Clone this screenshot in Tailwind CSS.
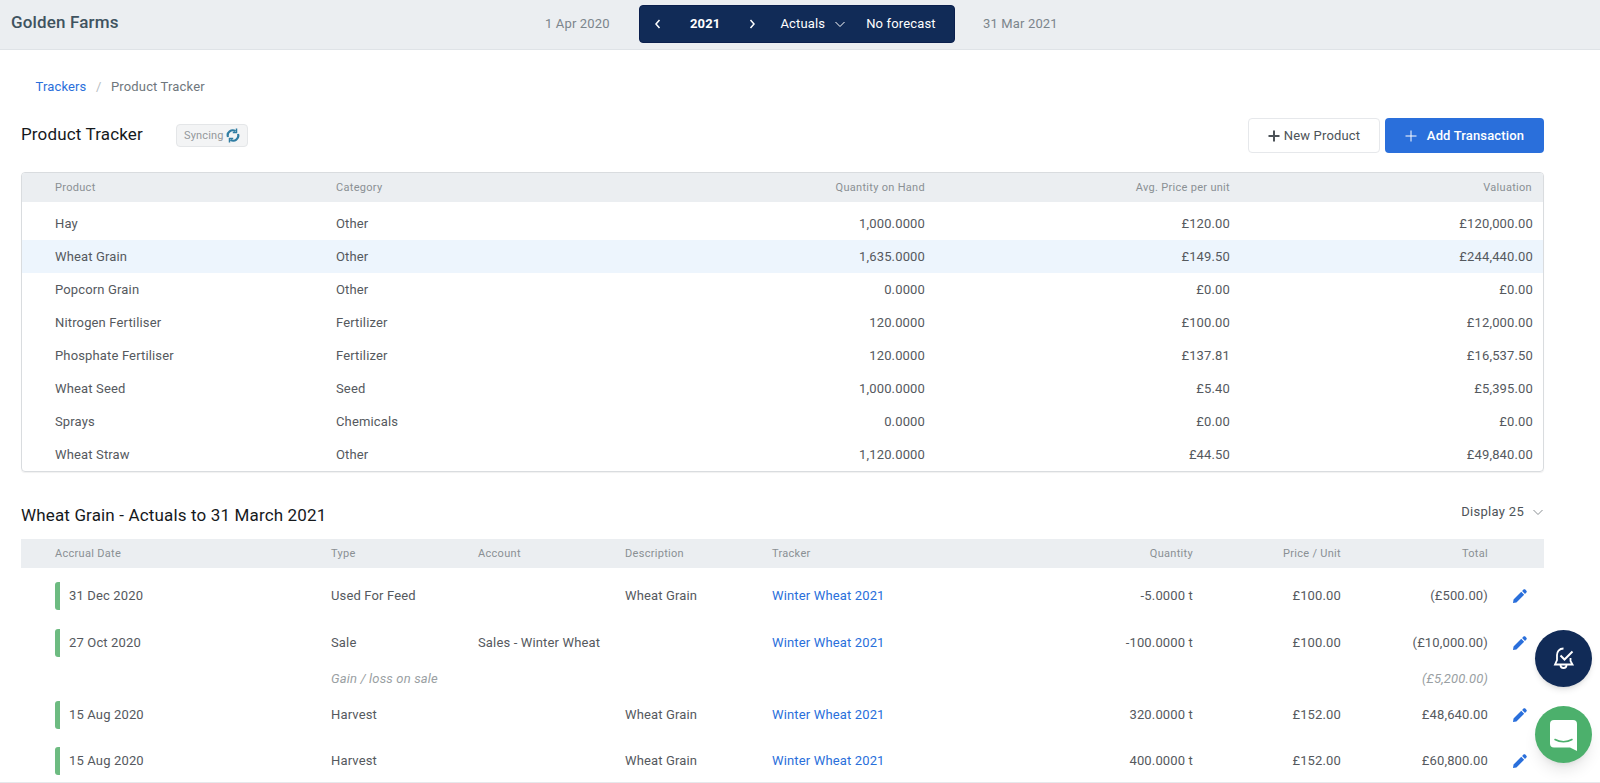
<!DOCTYPE html>
<html lang="en">
<head>
  <meta charset="UTF-8" />
  <meta name="viewport" content="width=device-width, initial-scale=1.0" />
  <title>Product Tracker</title>
  <script src="https://cdn.jsdelivr.net/npm/@tailwindcss/browser@4"></script>
</head>
<body class="h-[783px] overflow-hidden bg-white font-['Roboto',sans-serif] text-[13px] tracking-[0.15px] text-[#55595e]">
  <!-- Top bar -->
  <header class="relative flex h-[50px] items-center border-b border-[#dfe3e7] bg-[#ebeef1] pb-[2px]">
    <span class="mb-[2px] ml-[11px] w-[534px] text-[17px] font-medium text-[#3f5360]">Golden Farms</span>
    <span class="w-[94px] text-[#7c858c]">1 Apr 2020</span>
    <div class="flex h-[38px] w-[316px] items-center rounded border border-[#0a1f4d] bg-[#112b57] text-white">
      <svg class="ml-[12px] h-3 w-3" viewBox="0 0 12 12" fill="none" stroke="white" stroke-width="1.5"><path d="M7.500 2 4 6l3.500 4" /></svg>
      <span class="ml-[26px] text-[13px] font-bold">2021</span>
      <svg class="ml-[26px] h-3 w-3" viewBox="0 0 12 12" fill="none" stroke="white" stroke-width="1.5"><path d="M4.500 2 8 6l-3.500 4" /></svg>
      <span class="ml-[22px]">Actuals</span>
      <svg class="ml-[9px] h-3 w-3" viewBox="0 0 12 12" fill="none" stroke="white" stroke-width="1"><path d="M1.500 4 6 8.500 10.500 4" /></svg>
      <span class="ml-[20px]">No forecast</span>
    </div>
    <span class="ml-7 text-[#7c858c]">31 Mar 2021</span>
  </header>

  <main class="pr-[56px] pl-[21px]">
    <!-- Breadcrumb -->
    <nav class="mt-[26px] flex h-[22px] items-center gap-[9.5px] pl-[14.5px] text-[#6f777d]">
      <a class="text-[#2a6fdb]">Trackers</a><span class="text-[#b8bdc2]">/</span><span>Product Tracker</span>
    </nav>

    <!-- Title row -->
    <div class="mt-[20px] flex h-[35px] items-center">
      <h1 class="mb-[2px] w-[155px] text-[17px] font-normal text-[#16191c]">Product Tracker</h1>
      <span class="flex h-[23px] items-center gap-[2px] rounded border border-[#e4e6e8] bg-[#f3f4f5] px-[7px] text-[11px] text-[#93989c]"><span class="mt-[2px]">Syncing</span>
        <svg class="h-[15px] w-[14px]" viewBox="0 0 14 15" fill="none" stroke="#2f7da3" stroke-width="2.200"><path d="M2 9A5 5 0 0 1 9.500 3.200" /><path d="M12 6A5 5 0 0 1 4.500 11.800" /><path d="M10.500 0.500v4H6.800M3.500 14.500v-4h3.700" stroke-width="1.500" /></svg>
      </span>
      <button class="ml-auto flex h-[35px] w-[132px] items-center justify-center gap-1 rounded border border-[#e6e8eb] bg-white text-[#4d5358]">
        <svg class="h-3 w-3" viewBox="0 0 12 12" stroke="#4d5358" stroke-width="2"><path d="M6 0.500v11M0.500 6h11" /></svg>New Product
      </button>
      <button class="ml-[5px] flex h-[35px] w-[159px] items-center justify-center gap-[10px] rounded bg-[#2a6fdb] font-medium text-white">
        <svg class="h-3 w-3" viewBox="0 0 12 12" stroke="white" stroke-width="1"><path d="M6 0.500v11M0.500 6h11" /></svg>Add Transaction
      </button>
    </div>

    <!-- Product table -->
    <section class="mt-[19px] h-[300px] overflow-hidden rounded border border-[#d9dcdf] shadow-[0_1px_1px_rgba(0,0,0,0.06)]">
      <div class="grid h-[29px] grid-cols-[281px_280px_309px_305px_1fr] items-center bg-[#ebeef1] pt-[2px] pr-[11px] pl-[33px] text-[11px] tracking-[0.3px] text-[#8a9094]">
        <span>Product</span><span>Category</span><span class="text-right">Quantity on Hand</span><span class="text-right">Avg. Price per unit</span><span class="text-right">Valuation</span>
      </div>
      <div class="pt-[5px]">
        <div class="grid h-[33px] grid-cols-[281px_280px_309px_305px_1fr] items-center pr-[10px] pl-[33px]"><span>Hay</span><span>Other</span><span class="text-right">1,000.0000</span><span class="text-right">£120.00</span><span class="text-right">£120,000.00</span></div>
        <div class="grid h-[33px] grid-cols-[281px_280px_309px_305px_1fr] items-center bg-[#edf5fd] pr-[10px] pl-[33px]"><span>Wheat Grain</span><span>Other</span><span class="text-right">1,635.0000</span><span class="text-right">£149.50</span><span class="text-right">£244,440.00</span></div>
        <div class="grid h-[33px] grid-cols-[281px_280px_309px_305px_1fr] items-center pr-[10px] pl-[33px]"><span>Popcorn Grain</span><span>Other</span><span class="text-right">0.0000</span><span class="text-right">£0.00</span><span class="text-right">£0.00</span></div>
        <div class="grid h-[33px] grid-cols-[281px_280px_309px_305px_1fr] items-center pr-[10px] pl-[33px]"><span>Nitrogen Fertiliser</span><span>Fertilizer</span><span class="text-right">120.0000</span><span class="text-right">£100.00</span><span class="text-right">£12,000.00</span></div>
        <div class="grid h-[33px] grid-cols-[281px_280px_309px_305px_1fr] items-center pr-[10px] pl-[33px]"><span>Phosphate Fertiliser</span><span>Fertilizer</span><span class="text-right">120.0000</span><span class="text-right">£137.81</span><span class="text-right">£16,537.50</span></div>
        <div class="grid h-[33px] grid-cols-[281px_280px_309px_305px_1fr] items-center pr-[10px] pl-[33px]"><span>Wheat Seed</span><span>Seed</span><span class="text-right">1,000.0000</span><span class="text-right">£5.40</span><span class="text-right">£5,395.00</span></div>
        <div class="grid h-[33px] grid-cols-[281px_280px_309px_305px_1fr] items-center pr-[10px] pl-[33px]"><span>Sprays</span><span>Chemicals</span><span class="text-right">0.0000</span><span class="text-right">£0.00</span><span class="text-right">£0.00</span></div>
        <div class="grid h-[33px] grid-cols-[281px_280px_309px_305px_1fr] items-center pr-[10px] pl-[33px]"><span>Wheat Straw</span><span>Other</span><span class="text-right">1,120.0000</span><span class="text-right">£44.50</span><span class="text-right">£49,840.00</span></div>
      </div>
    </section>

    <!-- Transactions -->
    <div class="mt-[29px] flex h-[30px] items-center">
      <h2 class="text-[17px] font-normal text-[#16191c]">Wheat Grain - Actuals to 31 March 2021</h2>
      <span class="mb-2 ml-auto flex items-center gap-2 tracking-[0.3px] text-[#4d5358]">Display 25
        <svg class="h-3 w-3" viewBox="0 0 12 12" fill="none" stroke="#8a9094" stroke-width="1"><path d="M1.500 4 6 8.500 10.500 4" /></svg>
      </span>
    </div>
    <section class="mt-[8px]">
      <div class="grid h-[29px] grid-cols-[276px_147px_147px_147px_206px_215px_148px_147px_1fr] items-center bg-[#ebeef1] pt-[2px] pl-[34px] text-[11px] tracking-[0.3px] text-[#8a9094]">
        <span>Accrual Date</span><span>Type</span><span>Account</span><span>Description</span><span>Tracker</span><span class="text-right">Quantity</span><span class="text-right">Price / Unit</span><span class="text-right">Total</span><span></span>
      </div>
      <div class="mt-[4px] grid h-[48px] grid-cols-[276px_147px_147px_147px_206px_215px_148px_147px_1fr] items-center pl-[34px]">
        <span class="flex items-center gap-[9px]"><i class="h-[28px] w-[5px] rounded-l-[3px] bg-[#6dbb81]"></i>31 Dec 2020</span><span>Used For Feed</span><span></span><span>Wheat Grain</span><span class="text-[#2a6fdb]">Winter Wheat 2021</span><span class="text-right">-5.0000 t</span><span class="text-right">£100.00</span><span class="text-right">(£500.00)</span>
        <svg class="-mt-[2px] ml-[25px] h-[15px] w-[15px]" viewBox="0 0 14 14" fill="#2a6fdb"><path d="M0.500 10.800 0 14l3.200-.5 7.200-7.200-2.700-2.700zM8.500 2.800l2.700 2.700 1.300-1.300c.5-.5.500-1.200 0-1.700l-1-1c-.5-.5-1.200-.5-1.700 0z" /></svg>
      </div>
      <div class="grid h-[46px] grid-cols-[276px_147px_147px_147px_206px_215px_148px_147px_1fr] items-center pl-[34px]">
        <span class="flex items-center gap-[9px]"><i class="h-[28px] w-[5px] rounded-l-[3px] bg-[#6dbb81]"></i>27 Oct 2020</span><span>Sale</span><span>Sales - Winter Wheat</span><span></span><span class="text-[#2a6fdb]">Winter Wheat 2021</span><span class="text-right">-100.0000 t</span><span class="text-right">£100.00</span><span class="text-right">(£10,000.00)</span>
        <svg class="-mt-[2px] ml-[25px] h-[15px] w-[15px]" viewBox="0 0 14 14" fill="#2a6fdb"><path d="M0.500 10.800 0 14l3.200-.5 7.200-7.200-2.700-2.700zM8.500 2.800l2.700 2.700 1.300-1.300c.5-.5.500-1.200 0-1.700l-1-1c-.5-.5-1.200-.5-1.700 0z" /></svg>
      </div>
      <div class="grid h-[26px] grid-cols-[276px_147px_147px_147px_206px_215px_148px_147px_1fr] items-center pl-[34px] text-[#9a9fa3] italic">
        <span></span><span class="col-span-2">Gain / loss on sale</span><span></span><span></span><span></span><span></span><span class="text-right">(£5,200.00)</span>
      </div>
      <div class="grid h-[46px] grid-cols-[276px_147px_147px_147px_206px_215px_148px_147px_1fr] items-center pl-[34px]">
        <span class="flex items-center gap-[9px]"><i class="h-[28px] w-[5px] rounded-l-[3px] bg-[#6dbb81]"></i>15 Aug 2020</span><span>Harvest</span><span></span><span>Wheat Grain</span><span class="text-[#2a6fdb]">Winter Wheat 2021</span><span class="text-right">320.0000 t</span><span class="text-right">£152.00</span><span class="text-right">£48,640.00</span>
        <svg class="-mt-[2px] ml-[25px] h-[15px] w-[15px]" viewBox="0 0 14 14" fill="#2a6fdb"><path d="M0.500 10.800 0 14l3.200-.5 7.200-7.200-2.700-2.700zM8.500 2.800l2.700 2.700 1.300-1.300c.5-.5.500-1.200 0-1.700l-1-1c-.5-.5-1.200-.5-1.700 0z" /></svg>
      </div>
      <div class="grid h-[46px] grid-cols-[276px_147px_147px_147px_206px_215px_148px_147px_1fr] items-center pl-[34px]">
        <span class="flex items-center gap-[9px]"><i class="h-[28px] w-[5px] rounded-l-[3px] bg-[#6dbb81]"></i>15 Aug 2020</span><span>Harvest</span><span></span><span>Wheat Grain</span><span class="text-[#2a6fdb]">Winter Wheat 2021</span><span class="text-right">400.0000 t</span><span class="text-right">£152.00</span><span class="text-right">£60,800.00</span>
        <svg class="-mt-[2px] ml-[25px] h-[15px] w-[15px]" viewBox="0 0 14 14" fill="#2a6fdb"><path d="M0.500 10.800 0 14l3.200-.5 7.200-7.200-2.700-2.700zM8.500 2.800l2.700 2.700 1.300-1.300c.5-.5.500-1.200 0-1.700l-1-1c-.5-.5-1.200-.5-1.700 0z" /></svg>
      </div>
    </section>
  </main>

  <!-- Floating buttons -->
  <button class="absolute top-[630px] left-[1535px] flex h-[57px] w-[57px] items-center justify-center rounded-full bg-[#112b57] shadow-md">
    <svg class="h-[24px] w-[22px] shrink-0" viewBox="0 0 22 24" fill="none" stroke="white" stroke-width="1.800"><path d="M10.500 1.500C6 1.500 4 5 4 8v5L2 17.500h17.500L17.500 14v-3" /><path d="M7.500 18a3 3 0 0 0 6 0" /><path d="M7.500 8.500l4 4 8-8" stroke-width="2" /></svg>
  </button>
  <button class="absolute top-[706px] left-[1535px] flex h-[57px] w-[57px] items-center justify-center rounded-full bg-[#4cb06c] shadow-lg">
    <svg class="mt-[2px] h-[31px] w-[27px]" viewBox="0 0 27 31"><path d="M4 0h19a4 4 0 0 1 4 4v27l-7-3.500H4a4 4 0 0 1-4-4V4a4 4 0 0 1 4-4z" fill="white" /><path d="M5 19.500c5 3 12 3 17 0" fill="none" stroke="#4cb06c" stroke-width="1.500" stroke-linecap="round" /></svg>
  </button>
  <div class="absolute top-[782px] left-0 h-px w-full bg-[#e6e8eb]"></div>
</body>
</html>
